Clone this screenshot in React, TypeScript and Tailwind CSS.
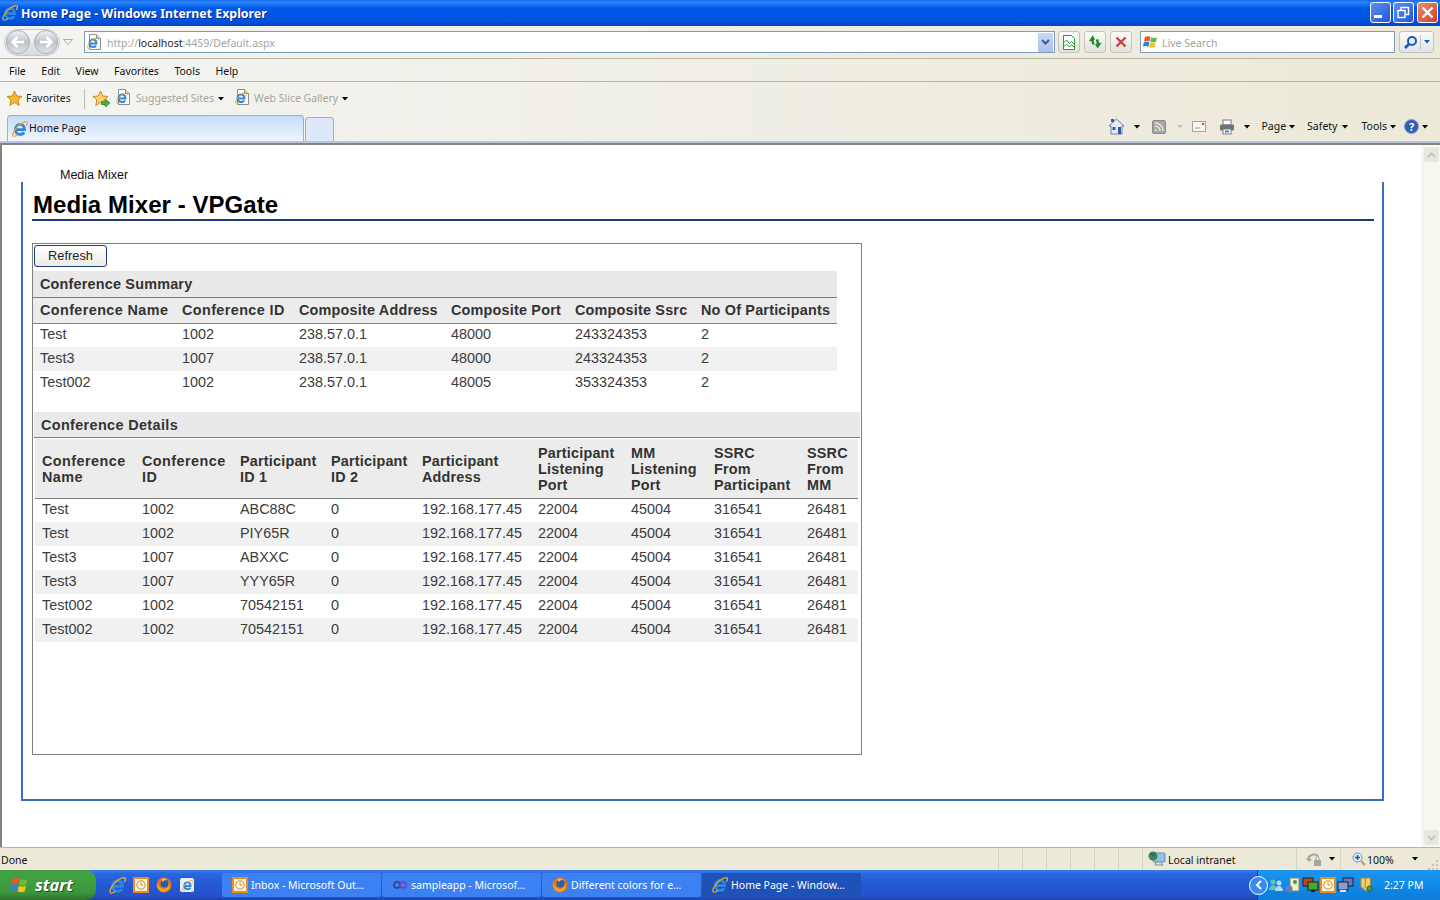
import React from "react";

const UI = "font-['Noto_Sans',sans-serif] text-[10.5px] leading-[13px]";

const summaryCols = ["Conference Name", "Conference ID", "Composite Address", "Composite Port", "Composite Ssrc", "No Of Participants"];
const summaryRows = [
  ["Test", "1002", "238.57.0.1", "48000", "243324353", "2"],
  ["Test3", "1007", "238.57.0.1", "48000", "243324353", "2"],
  ["Test002", "1002", "238.57.0.1", "48005", "353324353", "2"],
];

const detailCols = [
  ["Conference", "Name"],
  ["Conference", "ID"],
  ["Participant", "ID 1"],
  ["Participant", "ID 2"],
  ["Participant", "Address"],
  ["Participant", "Listening", "Port"],
  ["MM", "Listening", "Port"],
  ["SSRC", "From", "Participant"],
  ["SSRC", "From", "MM"],
];
const detailRows = [
  ["Test", "1002", "ABC88C"],
  ["Test", "1002", "PIY65R"],
  ["Test3", "1007", "ABXXC"],
  ["Test3", "1007", "YYY65R"],
  ["Test002", "1002", "70542151"],
  ["Test002", "1002", "70542151"],
];

const IeIcon = ({ size = 16 }: { size?: number }) => (
  <svg width={size} height={size} viewBox="0 0 16 16" fill="none" className="shrink-0">
    <path d="M3.600 8.600h8.900c.2-3-1.800-5.200-4.400-5.200-2.700 0-4.700 2.200-4.700 5s2 5 4.700 5c1.800 0 3.200-.8 4-2.200" stroke="#2f86dc" strokeWidth="2.800" />
    <path d="M1.200 14.800C-.2 12.800 4 6 8.500 3c3-2 6-3 6.800-1.800.5.800-.1 2.300-1 3.600" stroke="#f0a81e" strokeWidth="1.300" />
    <path d="M1.200 14.800c.9 1 3-.1 4.800-1.400" stroke="#f0a81e" strokeWidth="1.200" />
  </svg>
);

const PageIe = () => (
  <span className="relative inline-block w-[15px] h-[16px] shrink-0">
    <svg width="15" height="16" viewBox="0 0 15 16" className="absolute inset-0">
      <path d="M2.500.5h7l4 4v11h-11z" fill="#fff" stroke="#8c8c8c" />
      <path d="M9.500.5v4h4" fill="#e8e8e8" stroke="#8c8c8c" />
    </svg>
    <span className="absolute left-0 top-[3px]">
      <IeIcon size={12} />
    </span>
  </span>
);

const Caret = ({ color = "#000", className = "" }: { color?: string; className?: string }) => (
  <svg width="6" height="4" viewBox="0 0 6 4" className={`shrink-0 ${className}`}>
    <path d="M0 0h6L3 3.500z" fill={color} />
  </svg>
);

const WinFlag = ({ size = 16 }: { size?: number }) => (
  <svg width={size} height={size} viewBox="0 0 16 16" className="shrink-0">
    <path d="M2 3c2-1 3.500-1 5.500 0L6.500 7.500C4.500 6.500 3 6.500 1 7.500z" fill="#e8582a" />
    <path d="M8.200 3.200c2 1 3.500 1 5.800 0L13 7.700c-2 1-3.700 1-5.800 0z" fill="#6fb83a" />
    <path d="M.8 8.300c2-1 3.700-1 5.600 0l-1 4.500c-2-1-3.500-1-5.500 0z" fill="#3a7fe0" />
    <path d="M7 8.500c2 1 3.700 1 5.800 0l-1 4.500c-2 1-3.700 1-5.800 0z" fill="#f5c51e" />
  </svg>
);

const Firefox = () => (
  <svg width="16" height="16" viewBox="0 0 16 16" className="shrink-0">
    <circle cx="8" cy="8" r="7.500" fill="#e8731a" />
    <circle cx="8.500" cy="6.500" r="4" fill="#2a5ea8" />
    <path d="M1.500 6c1 4 4 6.500 8 5.500 2-.5 3.500-2.500 3-5 2 3 .5 8-5 8.500C3.500 15 .5 10.500 1.500 6z" fill="#f7a21c" />
    <path d="M6 2c2-1 4 0 4.500 1.500C9 3 7.500 3.500 7 5 6 4.500 5.500 3 6 2z" fill="#f5c04a" />
  </svg>
);

const Clock = () => (
  <span className="w-[16px] h-[16px] shrink-0 bg-[#fff6e0] border-2 border-[#f08a1c] flex items-center justify-center">
    <svg width="10" height="10" viewBox="0 0 10 10" fill="none">
      <circle cx="5" cy="5" r="4.200" stroke="#c98a28" />
      <path d="M5 2.500V5h2" stroke="#c98a28" />
    </svg>
  </span>
);

const NavButton = ({ dir }: { dir: "l" | "r" }) => (
  <span className="w-[24px] h-[24px] rounded-full border border-[#a9adb3] bg-linear-to-b from-[#eef1f4] via-[#bcc4cc] to-[#dfe5ea] flex items-center justify-center">
    <svg width="16" height="14" viewBox="0 0 16 14" fill="none">
      {dir === "l" ? (
        <path d="M14 7H3M7.500 2 2.500 7l5 5" stroke="#fff" strokeWidth="2.600" />
      ) : (
        <path d="M2 7h11M8.500 2l5 5-5 5" stroke="#fff" strokeWidth="2.600" />
      )}
    </svg>
  </span>
);

const SmallButton = ({ children }: { children: React.ReactNode }) => (
  <span className="w-[22px] h-[22px] rounded-[3px] border border-[#c4c4bc] bg-linear-to-b from-[#fbfbf8] to-[#e2e2dc] flex items-center justify-center">
    {children}
  </span>
);

const WinButton = ({ children, red }: { children: React.ReactNode; red?: boolean }) => (
  <span
    className={`w-[21px] h-[21px] rounded-[3px] border border-white flex items-center justify-center ${
      red ? "bg-linear-to-br from-[#ea8a6a] to-[#d0401c]" : "bg-linear-to-br from-[#5f8ff0] to-[#2255d8]"
    }`}
  >
    {children}
  </span>
);

const TaskButton = ({ icon, label, active }: { icon: React.ReactNode; label: string; active?: boolean }) => (
  <div
    className={`w-[159px] h-[24px] rounded-[2px] mr-px flex items-center pl-[10px] gap-[3px] text-white ${
      active ? "bg-[#1e52b7]" : "bg-[#3c81f3]"
    }`}
  >
    {icon}
    <span className="whitespace-nowrap">{label}</span>
  </div>
);

export default function App() {
  return (
    <div className={`w-[1440px] h-[900px] overflow-hidden flex flex-col bg-white ${UI}`}>
      {/* title bar */}
      <div className="h-[26px] shrink-0 flex items-center pl-[2px] pr-[2px] bg-[linear-gradient(180deg,#1a6cf0_0%,#2b85fa_10%,#0058e6_30%,#0055e3_75%,#0046c8_100%)]">
        <IeIcon size={16} />
        <span className="ml-[3px] text-white font-bold text-[12.35px] [text-shadow:1px_1px_#0a2a90]">
          Home Page - Windows Internet Explorer
        </span>
        <div className="ml-auto flex gap-[2px] mt-[-2px]">
          <WinButton>
            <span className="w-[8px] h-[3px] bg-white mt-[9px] mr-[5px]" />
          </WinButton>
          <WinButton>
            <svg width="13" height="13" viewBox="0 0 13 13" fill="none" stroke="#fff">
              <rect x="1" y="4.500" width="7" height="7" strokeWidth="1.400" />
              <path d="M4 4V1.500h7.500v7H8.500" strokeWidth="1.400" />
            </svg>
          </WinButton>
          <span className="ml-px">
            <WinButton red>
              <svg width="13" height="13" viewBox="0 0 13 13" stroke="#fff" strokeWidth="2.400">
                <path d="M1.500 1.500l10 10M11.500 1.500l-10 10" />
              </svg>
            </WinButton>
          </span>
        </div>
      </div>

      {/* address row */}
      <div className="h-[33px] shrink-0 flex items-center border-b border-[#b8b5a6] bg-linear-to-r from-[#f4f4f2] to-[#ece9d8]">
        <div className="ml-[4px] w-[56px] h-[27px] rounded-full border border-[#c8cbd0] bg-linear-to-b from-[#f6f7f8] to-[#d8dadc] flex items-center justify-between px-px">
          <NavButton dir="l" />
          <NavButton dir="r" />
        </div>
        <svg width="10" height="6" viewBox="0 0 10 6" fill="none" className="ml-[3px]">
          <path d="M.5.500h9L5 5.500z" stroke="#a8aaae" />
        </svg>
        <div className="ml-[11px] w-[971px] h-[22px] border border-[#7f9db9] bg-white flex items-center pl-[2px]">
          <PageIe />
          <span className="ml-[5px] pt-[2px] text-[#a5a59c]">
            http://<span className="text-[#222]">localhost</span>:4459/Default.aspx
          </span>
          <span className="ml-auto mr-px w-[15px] h-[19px] bg-linear-to-b from-[#c8d8f8] to-[#a9c0ee] flex items-center justify-center">
            <svg width="9" height="7" viewBox="0 0 9 7" fill="none" stroke="#3d5a8c" strokeWidth="2">
              <path d="M1 1l3.500 3.500L8 1" />
            </svg>
          </span>
        </div>
        <div className="ml-[3px] flex gap-[4px]">
          <SmallButton>
            <svg width="14" height="15" viewBox="0 0 14 15" fill="none" stroke="#2c9a3a">
              <path d="M1.500.5h8l3 3v11h-11z" fill="#fff" />
              <path d="M1.500 8l3-3 3 3.500 2-2 3 3M1.500 12l3-3 3 3 2-2 3 2" />
            </svg>
          </SmallButton>
          <SmallButton>
            <svg width="16" height="14" viewBox="0 0 16 14" fill="#1f8a2e">
              <path d="M7 1L1.500 5.500 4 6v4h2.500V6L8 5.500z" transform="rotate(-15 4 5)" />
              <path d="M9.500 13L15 8.500 12.500 8V4H10v4l-2 .5z" transform="rotate(-15 12 9)" />
            </svg>
          </SmallButton>
          <SmallButton>
            <svg width="12" height="12" viewBox="0 0 12 12" stroke="#cc3a38" strokeWidth="2.200">
              <path d="M1.500 1.500l9 9M10.500 1.500l-9 9" />
            </svg>
          </SmallButton>
        </div>
        <div className="ml-[8px] w-[255px] h-[22px] border border-[#7f9db9] bg-white flex items-center pl-[2px] gap-[3px] text-[#a5a59c]">
          <WinFlag />
          <span className="pt-[2px]">Live Search</span>
        </div>
        <div className="ml-[4px] w-[35px] h-[22px] rounded-[3px] border border-[#c4c4bc] bg-linear-to-b from-[#fbfbf8] to-[#dfe4ea] flex items-center">
          <span className="w-[21px] flex justify-center border-r border-[#c4c4bc]">
            <svg width="15" height="15" viewBox="0 0 15 15" fill="none" stroke="#1558c8">
              <circle cx="9" cy="6" r="4" strokeWidth="2" fill="#eaf2ff" />
              <path d="M6 9l-4 4" strokeWidth="2.600" />
            </svg>
          </span>
          <span className="flex-1 flex justify-center">
            <Caret color="#1558c8" />
          </span>
        </div>
      </div>

      {/* menu */}
      <div className="h-[23px] shrink-0 flex items-center pl-[9px] pt-[2px] gap-[15.5px] text-[#111] border-b border-[#b8b5a6] bg-linear-to-r from-[#f4f4f2] to-[#ece9d8]">
        <span>File</span>
        <span>Edit</span>
        <span>View</span>
        <span>Favorites</span>
        <span>Tools</span>
        <span>Help</span>
      </div>

      {/* favorites + tabs */}
      <div className="h-[59px] shrink-0 flex flex-col bg-linear-to-r from-[#f4f4f2] to-[#ece9d8]">
        <div className="h-[33px] flex items-center pl-[6px]">
          <svg width="17" height="17" viewBox="0 0 17 17" fill="#f8b933" stroke="#c98a1c">
            <path d="M8.500 1l2.200 5 5.300.5-4 3.500 1.200 5.500-4.700-3-4.700 3 1.200-5.500-4-3.500 5.300-.5z" />
          </svg>
          <span className="ml-[3px] text-[#222]">Favorites</span>
          <span className="ml-[13px] w-px h-[20px] bg-[#c0bdb0]" />
          <span className="relative ml-[7px] w-[17px] h-[17px]">
            <svg width="17" height="17" viewBox="0 0 17 17" fill="#fbd56a" stroke="#c98a1c">
              <path d="M8.500 1l2.200 5 5.300.5-4 3.500 1.200 5.500-4.700-3-4.700 3 1.200-5.500-4-3.500 5.300-.5z" />
            </svg>
            <svg width="9" height="8" viewBox="0 0 9 8" fill="#3fb53a" stroke="#1d7a20" strokeWidth=".6" className="absolute right-[-1px] bottom-0">
              <path d="M0 2.500h4.500V0L9 4 4.500 8V5.500H0z" />
            </svg>
          </span>
          <span className="ml-[7px]">
            <PageIe />
          </span>
          <span className="ml-[5px] text-[#a5a59c]">Suggested Sites</span>
          <Caret className="ml-[4px]" />
          <span className="ml-[11px]">
            <PageIe />
          </span>
          <span className="ml-[4px] text-[#a5a59c]">Web Slice Gallery</span>
          <Caret className="ml-[4px]" />
        </div>
        <div className="flex-1 flex items-end pl-[7px]">
          <div className="w-[297px] h-[26px] rounded-t-[4px] border border-b-0 border-[#a3adc0] bg-linear-to-b from-[#c4dcf9] to-[#f0f5fd] flex items-center pl-[4px] gap-px text-[#111]">
            <IeIcon size={16} />
            Home Page
          </div>
          <div className="ml-px w-[29px] h-[24px] rounded-t-[4px] border border-b-0 border-[#a3adc0] bg-[#dde8f8]" />
          <div className="ml-auto mr-[12px] h-[26px] flex items-center text-[#111] pb-[3px]">
            <svg width="17" height="17" viewBox="0 0 17 17">
              <path d="M8.500 1L1 8h2v8h11V8h2z" fill="#e6ecf5" stroke="#6b7fa0" />
              <rect x="4.500" y="9" width="3" height="3" fill="#3a5a9c" />
              <rect x="10" y="9" width="3" height="7" fill="#2a5ab0" />
              <rect x="3" y="1" width="3" height="3" fill="#2c5fb8" />
            </svg>
            <Caret className="ml-[9px]" />
            <span className="ml-[12px] w-[14px] h-[14px] rounded-[2px] bg-[#a6a6a2] border border-[#8a8a86] flex items-center justify-center">
              <svg width="10" height="10" viewBox="0 0 10 10" fill="none" stroke="#e6e6e2" strokeWidth="1.400">
                <path d="M1 4a5 5 0 0 1 5 5M1 1a8 8 0 0 1 8 8" />
                <circle cx="1.800" cy="8.200" r="1" fill="#e6e6e2" stroke="none" />
              </svg>
            </span>
            <Caret color="#c4c4bc" className="ml-[11px]" />
            <svg width="14" height="11" viewBox="0 0 14 11" className="ml-[9px]">
              <rect x=".5" y=".5" width="13" height="10" fill="#f6f6f4" stroke="#a4a4a0" />
              <path d="M3 7h5" stroke="#9a9a96" />
              <rect x="10" y="2" width="2" height="2" fill="#d04a3a" />
            </svg>
            <svg width="16" height="16" viewBox="0 0 16 16" className="ml-[13px]">
              <rect x="4" y="1" width="8" height="5" fill="#fff" stroke="#7a7a78" />
              <rect x="1" y="5.500" width="14" height="6" rx="1" fill="#6e7478" />
              <rect x="4" y="10" width="8" height="5" fill="#fff" stroke="#7a7a78" />
              <rect x="6" y="11.500" width="4" height="2" fill="#3a8ab0" />
            </svg>
            <Caret className="ml-[9px]" />
            <span className="ml-[11px]">Page</span>
            <Caret className="ml-[3px]" />
            <span className="ml-[12px]">Safety</span>
            <Caret className="ml-[5px]" />
            <span className="ml-[13px]">Tools</span>
            <Caret className="ml-[3px]" />
            <span className="ml-[8px] w-[15px] h-[15px] rounded-full bg-[#2f5fb8] border border-[#8aa0cc] text-white font-bold text-[11px] flex items-center justify-center">
              ?
            </span>
            <Caret className="ml-[3px]" />
          </div>
        </div>
      </div>

      {/* frame + page */}
      <div className="h-[2px] shrink-0 bg-[#b9c3da]" />
      <div className="h-[2px] shrink-0 bg-[#85857a]" />
      <div className="flex-1 min-h-0 flex border-l-2 border-[#85857a] font-['Liberation_Sans',sans-serif]">
        <div className="w-[1420px] shrink-0 bg-white">
          <div className="pl-[58px] pt-[23px] h-[37px] text-[12.5px] leading-[14px] text-[#111]">Media Mixer</div>
          <div className="ml-[19px] w-[1363px] h-[619px] border-x-2 border-b-2 border-[#3b6fbe] pl-[9px] pr-[8px]">
            <h1 className="h-[39px] border-b-2 border-[#1f3a7c] pl-px pt-[9px] text-[24px] leading-[28px] font-bold tracking-[0.05px] text-black">
              Media Mixer - VPGate
            </h1>
            <div className="mt-[22px] w-[830px] h-[512px] border border-[#808080] text-[14.4px] leading-[16px] text-[#3c3c3c]">
              <button className="block mt-px ml-px w-[73px] h-[22px] rounded-[3px] border border-[#1c3f73] bg-linear-to-b from-white to-[#ecebe4] text-[12.8px] leading-none text-[#222]">
                Refresh
              </button>
              <table className="mt-[4px] table-fixed border-collapse w-[804px] bg-white">
                <colgroup>
                  <col className="w-[142px]" />
                  <col className="w-[117px]" />
                  <col className="w-[152px]" />
                  <col className="w-[124px]" />
                  <col className="w-[126px]" />
                  <col className="w-[143px]" />
                </colgroup>
                <thead className="font-bold text-left text-[#333] tracking-[0.2px]">
                  <tr className="h-[26px] bg-[#e9e9e9] border-b border-[#808080]">
                    <th colSpan={6} className="pl-[7px] font-bold">
                      Conference Summary
                    </th>
                  </tr>
                  <tr className="h-[26px] bg-[#ececec] border-b border-[#808080]">
                    {summaryCols.map((c, i) => (
                      <th key={c} className={`pl-[7px] font-bold whitespace-nowrap ${i < 2 ? "tracking-[0.4px]" : ""}`}>
                        {c}
                      </th>
                    ))}
                  </tr>
                </thead>
                <tbody>
                  {summaryRows.map((r, i) => (
                    <tr key={i} className={`h-[24px] ${i === 1 ? "bg-[#f1f1f1]" : ""}`}>
                      {r.map((v, j) => (
                        <td key={j} className="pl-[7px] pb-[2px]">
                          {v}
                        </td>
                      ))}
                    </tr>
                  ))}
                </tbody>
              </table>

              <div className="mt-[17px] ml-px w-[826px] h-[26px] bg-[#e9e9e9] border-b border-[#808080] pl-[7px] flex items-center font-bold text-[#333] tracking-[0.37px]">
                Conference Details
              </div>
              <table className="mt-px ml-[2px] table-fixed border-collapse w-[823px]">
                <colgroup>
                  <col className="w-[100px]" />
                  <col className="w-[98px]" />
                  <col className="w-[91px]" />
                  <col className="w-[91px]" />
                  <col className="w-[116px]" />
                  <col className="w-[93px]" />
                  <col className="w-[83px]" />
                  <col className="w-[93px]" />
                  <col className="w-[58px]" />
                </colgroup>
                <thead>
                  <tr className="h-[59px] bg-[#ececec] border-b border-[#808080] text-left text-[#333] tracking-[0.2px]">
                    {detailCols.map((lines, i) => (
                      <th key={i} className={`pl-[7px] pt-[2px] font-bold whitespace-nowrap ${i < 2 ? "tracking-[0.45px]" : ""}`}>
                        {lines.map((l) => (
                          <div key={l}>{l}</div>
                        ))}
                      </th>
                    ))}
                  </tr>
                </thead>
                <tbody>
                  {detailRows.map((r, i) => (
                    <tr key={i} className={`h-[24px] ${i % 2 === 1 ? "bg-[#f1f1f1]" : ""}`}>
                      {[...r, "0", "192.168.177.45", "22004", "45004", "316541", "26481"].map((v, j) => (
                        <td key={j} className="pl-[7px] pb-[2px] whitespace-nowrap">
                          {v}
                        </td>
                      ))}
                    </tr>
                  ))}
                </tbody>
              </table>
            </div>
          </div>
        </div>
        {/* scrollbar */}
        <div className="w-[18px] shrink-0 border-l border-[#eeeeea] bg-[#f8f8f0] flex flex-col justify-between items-start pl-px pb-[2px] pt-[2px]">
          <span className="w-[15px] h-[15px] rounded-[2px] bg-[#e9e8df] flex items-center justify-center">
            <svg width="9" height="6" viewBox="0 0 9 6" fill="none" stroke="#c4c4bc" strokeWidth="2">
              <path d="M1 5l3.500-3.500L8 5" />
            </svg>
          </span>
          <span className="w-[15px] h-[15px] rounded-[2px] bg-[#e9e8df] flex items-center justify-center">
            <svg width="9" height="6" viewBox="0 0 9 6" fill="none" stroke="#c4c4bc" strokeWidth="2">
              <path d="M1 1l3.500 3.500L8 1" />
            </svg>
          </span>
        </div>
      </div>

      {/* status bar */}
      <div className="h-[23px] shrink-0 border-t border-[#b8b5a6] bg-[#ece9d8] flex items-center text-[#111]">
        <span className="ml-px w-[997px] pt-[2px]">Done</span>
        <span className="flex h-full">
          {[0, 1, 2, 3, 4, 5].map((i) => (
            <span key={i} className="w-[24px] h-full border-l border-[#d6d3c4]" />
          ))}
        </span>
        <span className="w-[154px] h-full border-l border-[#d6d3c4] flex items-center pl-[5px] gap-[2px]">
          <svg width="18" height="17" viewBox="0 0 18 17">
            <rect x="5" y="2" width="12" height="9" rx="1" fill="#8cc4ee" stroke="#6a8ab0" />
            <circle cx="5" cy="5" r="4.500" fill="#3a8a4a" />
            <path d="M2 3c2 0 3 1 5 0" stroke="#2a5ab0" fill="none" strokeWidth="2" />
            <path d="M8 11h5l2 3H7z" fill="#d8dce2" stroke="#8a8e96" />
          </svg>
          <span className="pt-[2px]">Local intranet</span>
        </span>
        <span className="w-[44px] h-full border-l border-[#d6d3c4] flex items-center pl-[9px]">
          <svg width="17" height="15" viewBox="0 0 17 15" fill="none">
            <path d="M2 8a6 6 0 0 1 10-4" stroke="#a4a4a0" strokeWidth="2" />
            <path d="M0 6l3 4 3-3z" fill="#a4a4a0" />
            <rect x="8" y="8" width="7" height="6" fill="#a4a4a0" />
            <path d="M10 8V6a1.500 1.500 0 0 1 3 0v2" stroke="#a4a4a0" />
          </svg>
          <Caret className="ml-[6px]" />
        </span>
        <span className="w-[88px] h-full border-l border-[#d6d3c4] flex items-center pl-[11px]">
          <svg width="14" height="14" viewBox="0 0 14 14" fill="none">
            <circle cx="5.500" cy="5.500" r="4.500" fill="#e4eeff" stroke="#7a8ea8" />
            <path d="M3 5.500h5M5.500 3v5" stroke="#1f55c8" strokeWidth="1.600" />
            <path d="M9 9l4 4" stroke="#c09a5a" strokeWidth="2" />
          </svg>
          <span className="ml-px pt-[2px]">100%</span>
          <Caret className="ml-[18px]" />
        </span>
        <svg width="12" height="22" viewBox="0 0 12 22" fill="#c8c5b4" className="shrink-0">
          <rect x="8" y="12" width="2" height="2" />
          <rect x="4" y="16" width="2" height="2" />
          <rect x="8" y="16" width="2" height="2" />
          <rect x="0" y="20" width="2" height="2" />
          <rect x="4" y="20" width="2" height="2" />
          <rect x="8" y="20" width="2" height="2" />
        </svg>
      </div>

      {/* taskbar */}
      <div className="h-[30px] shrink-0 flex items-center bg-[linear-gradient(180deg,#3a7fe8_0%,#2a66e0_12%,#2459d4_50%,#2452c8_88%,#1c45a8_100%)]">
        <div className="w-[96px] h-full rounded-r-[10px] bg-[linear-gradient(180deg,#4a9a4a_0%,#3fa33f_15%,#3c963c_75%,#2a752a_100%)] flex items-center pl-[10px] gap-[5px]">
          <WinFlag size={20} />
          <span className="text-white font-bold italic text-[16.5px] pb-[2px] [text-shadow:1px_1px_#1c4a1c]">start</span>
        </div>
        <div className="ml-[13px] w-[113px] flex gap-[7px] items-center">
          <IeIcon size={17} />
          <Clock />
          <Firefox />
          <span className="w-[16px] h-[16px] rounded-[3px] bg-[#e8f0fc] border border-[#2a5ab0] flex items-center justify-center">
            <IeIcon size={11} />
          </span>
        </div>
        <TaskButton icon={<Clock />} label="Inbox - Microsoft Out…" />
        <TaskButton
          icon={
            <svg width="16" height="10" viewBox="0 0 16 10" fill="none" strokeWidth="1.600" className="shrink-0">
              <circle cx="5" cy="5" r="3" stroke="#2e3f8a" />
              <circle cx="11" cy="5" r="3" stroke="#7a3fb0" />
            </svg>
          }
          label="sampleapp - Microsof…"
        />
        <TaskButton icon={<Firefox />} label="Different colors for e…" />
        <TaskButton icon={<IeIcon size={16} />} label="Home Page - Window…" active />
        <div className="ml-auto w-[183px] h-full bg-[linear-gradient(180deg,#1e94ee_0%,#0f8be8_50%,#0d7bd8_100%)] border-l border-[#0a3f9a] flex items-center relative">
          <span className="absolute left-[-9px] w-[19px] h-[19px] rounded-full bg-[#3a8aee] border border-white flex items-center justify-center">
            <svg width="8" height="10" viewBox="0 0 8 10" fill="none" stroke="#fff" strokeWidth="2">
              <path d="M6 1L2 5l4 4" />
            </svg>
          </span>
          <div className="ml-[10px] flex items-center gap-px">
            <svg width="16" height="16" viewBox="0 0 16 16">
              <circle cx="5" cy="5" r="2.500" fill="#6fc2a0" />
              <path d="M1 13c0-3 2-5 4-5s4 2 4 5z" fill="#6fc2a0" />
              <circle cx="11" cy="6" r="2.500" fill="#b8d8f8" />
              <path d="M7 14c0-3 2-5 4-5s4 2 4 5z" fill="#b8d8f8" />
            </svg>
            <svg width="16" height="16" viewBox="0 0 16 16">
              <path d="M5 1h9v13H5z" fill="#f5edc8" stroke="#8a8a70" />
              <circle cx="4" cy="12" r="3.500" fill="#6a7ac0" />
              <circle cx="10" cy="5" r="2" fill="#3a9a4a" />
            </svg>
            <svg width="17" height="16" viewBox="0 0 17 16">
              <rect x="1" y="1" width="10" height="8" fill="#c8401c" stroke="#222" />
              <rect x="6" y="5" width="10" height="8" fill="#4aa82a" stroke="#222" />
              <rect x="9" y="13" width="4" height="2" fill="#222" />
            </svg>
            <Clock />
            <svg width="17" height="16" viewBox="0 0 17 16">
              <rect x="6" y="1" width="10" height="8" fill="#6a7ab8" stroke="#223" />
              <rect x="1" y="5" width="10" height="8" fill="#8a9ad8" stroke="#223" />
              <rect x="3" y="13" width="6" height="2" fill="#dde" />
            </svg>
          </div>
          <svg width="14" height="18" viewBox="0 0 16 18" className="ml-[6px]">
            <path d="M1 1h11v10l-5 5-6-5z" fill="#f0cc70" stroke="#a8842a" />
            <path d="M6 1v12" stroke="#a8842a" />
            <circle cx="11" cy="13" r="3" fill="#3aa83a" stroke="#1c5a1c" />
          </svg>
          <span className="ml-[10px] text-white">2:27 PM</span>
        </div>
      </div>
    </div>
  );
}
